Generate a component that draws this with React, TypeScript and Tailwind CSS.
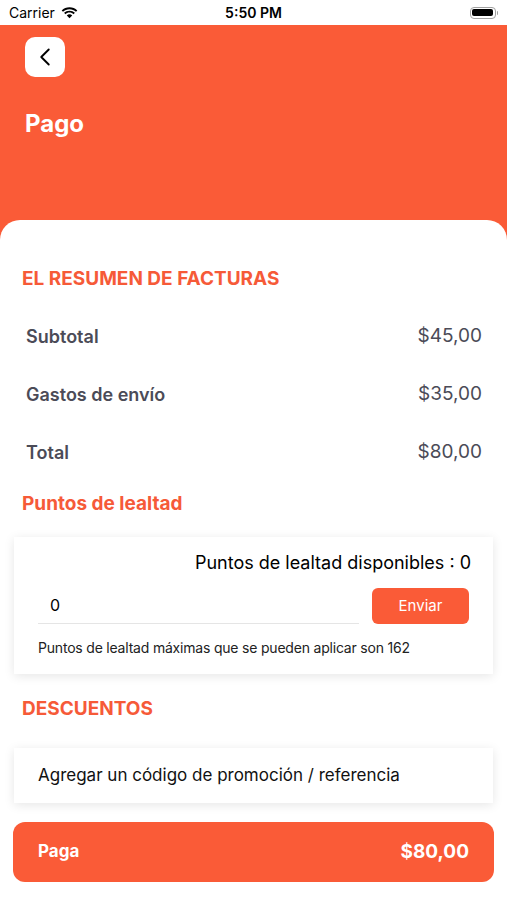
import { ChevronLeft } from "lucide-react";

const font = { fontFamily: "Inter, 'Noto Sans', sans-serif" };

function StatusBar() {
  return (
    <div className="relative flex h-[25px] items-center bg-white px-[9px]">
      <div className="flex items-center gap-[6px]">
        <span className="text-[14px] text-black">Carrier</span>
        <svg width="17" height="12" viewBox="0 0 17 12">
          <path d="M8.5 2.2c2.5 0 4.8 1 6.5 2.6l1.3-1.4C14.2 1.4 11.5.2 8.5.2S2.8 1.4.7 3.4L2 4.8c1.7-1.6 4-2.6 6.5-2.6z" fill="#000" />
          <path d="M8.5 5.6c1.6 0 3 .6 4.1 1.6l1.3-1.4C12.5 4.5 10.6 3.7 8.5 3.7S4.5 4.5 3.1 5.8l1.3 1.4c1.1-1 2.5-1.6 4.1-1.6z" fill="#000" />
          <path d="M8.5 7.3c-1 0-2 .4-2.7 1.1L8.5 11.3l2.7-2.9c-.7-.7-1.7-1.1-2.7-1.1z" fill="#000" />
        </svg>
      </div>
      <span className="absolute left-1/2 -translate-x-1/2 text-[14px] font-semibold text-black">5:50 PM</span>
      <div className="ml-auto flex items-center">
        <div className="h-[12px] w-[26px] rounded-[4px] border border-[#a0a0a0] p-[1.5px]">
          <div className="h-full w-full rounded-[2px] bg-black" />
        </div>
        <div className="ml-[1px] h-[4px] w-[1.5px] rounded-r bg-[#a0a0a0]" />
      </div>
    </div>
  );
}

function Row({ label, value }: { label: string; value: string }) {
  return (
    <div className="flex h-[58px] items-center justify-between pl-[26px] pr-[25px]">
      <span className="text-[18px] font-semibold text-[#4b4b57]">{label}</span>
      <span className="text-[19px] text-[#4b4b57]">{value}</span>
    </div>
  );
}

export default function App() {
  return (
    <div className="h-[900px] w-[507px] overflow-hidden bg-[#fa5b37]" style={font}>
      <StatusBar />

      {/* Header */}
      <div className="px-[25px] pt-[12px]">
        <button className="flex h-[40px] w-[40px] items-center justify-center rounded-[10px] bg-white">
          <ChevronLeft className="h-[30px] w-[30px] text-black" strokeWidth={1.5} />
        </button>
        <h1 className="mt-[32px] text-[24px] font-bold leading-[30px] text-white">Pago</h1>
      </div>

      {/* Content */}
      <div className="mt-[81px] h-[700px] rounded-t-[20px] bg-white pt-[47px]">
        <h2 className="px-[22px] text-[19px] font-bold leading-[24px] text-[#f65a38]">EL RESUMEN DE FACTURAS</h2>

        <div className="mt-[16px]">
          <Row label="Subtotal" value="$45,00" />
          <Row label="Gastos de envío" value="$35,00" />
          <Row label="Total" value="$80,00" />
        </div>

        <h2 className="mt-[11px] px-[22px] text-[19px] font-bold leading-[24px] text-[#f65a38]">Puntos de lealtad</h2>

        <div className="mx-[14px] mt-[21px] bg-white px-[24px] pb-[16px] pt-[15px] shadow-[0_2px_10px_rgba(0,0,0,0.10)]">
          <p className="-mr-[2px] text-right text-[18px] leading-[22px] text-black">Puntos de lealtad disponibles : 0</p>
          <div className="mt-[13px] flex items-end gap-[13px]">
            <div className="flex h-[37px] flex-1 items-center border-b border-[#e5e5e5] pl-[12px]">
              <span className="text-[16px] text-black">0</span>
            </div>
            <button className="flex h-[36px] w-[97px] items-center justify-center rounded-[6px] bg-[#fa5b37] text-[15px] text-white">
              Enviar
            </button>
          </div>
          <p className="mt-[14px] text-[14px] leading-[20px] tracking-[-0.2px] text-[#222]">
            Puntos de lealtad máximas que se pueden aplicar son 162
          </p>
        </div>

        <h2 className="mt-[23px] px-[22px] text-[19px] font-bold leading-[24px] text-[#f65a38]">DESCUENTOS</h2>

        <div className="mx-[14px] mt-[27px] flex h-[55px] items-center bg-white px-[24px] shadow-[0_2px_10px_rgba(0,0,0,0.10)]">
          <span className="text-[17px] text-[#111]">Agregar un código de promoción / referencia</span>
        </div>

        <button className="mx-[13px] mt-[19px] flex h-[60px] w-[481px] items-center justify-between rounded-[12px] bg-[#fa5b37] px-[25px] text-white">
          <span className="text-[17px] font-bold">Paga</span>
          <span className="text-[19px] font-bold">$80,00</span>
        </button>
      </div>
    </div>
  );
}
